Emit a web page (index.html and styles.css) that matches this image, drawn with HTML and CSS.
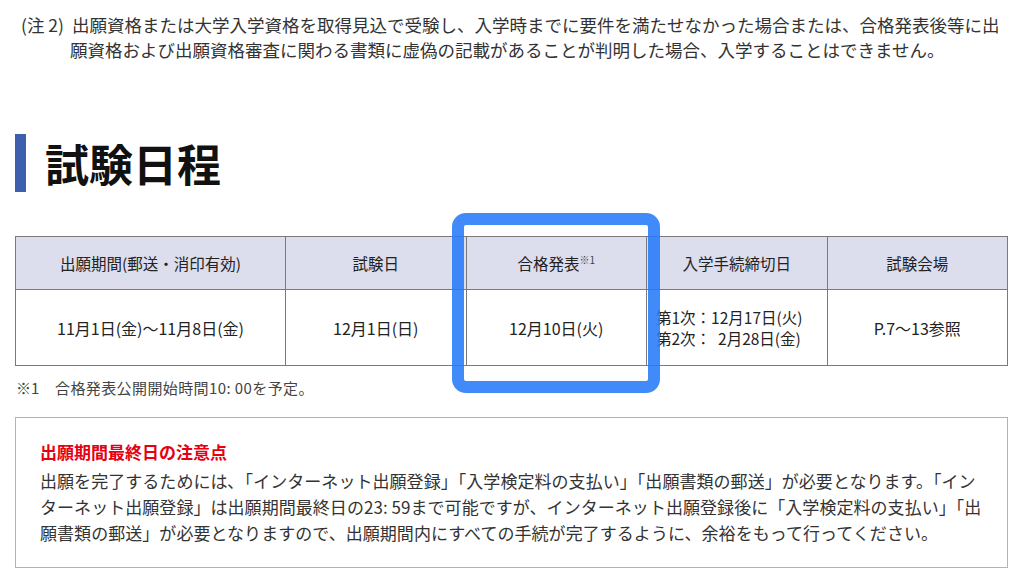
FILE: index.html
```html
<!DOCTYPE html>
<html lang="ja">
	<head>
		<meta charset="UTF-8" />
		<meta name="viewport" content="width=device-width, initial-scale=1.0" />
		<title>試験日程</title>
		<link rel="stylesheet" href="styles.css">
	</head>
	<body>
		<!-- 注記 -->
		<p class="note">
			<span class="note__label">(注 2)</span>出願資格または大学入学資格を取得見込で受験し、入学時までに要件を満たせなかった場合または、合格発表後等に出<br>願資格および出願資格審査に関わる書類に虚偽の記載があることが判明した場合、入学することはできません。
		</p>

		<h2 class="section-title">試験日程</h2>

		<!-- 日程表 -->
		<div class="schedule-wrap">
			<table class="schedule">
				<thead>
					<tr>
						<th class="col-wide">出願期間(郵送・消印有効)</th>
						<th>試験日</th>
						<th>合格発表<sup>※1</sup></th>
						<th>入学手続締切日</th>
						<th>試験会場</th>
					</tr>
				</thead>
				<tbody>
					<tr>
						<td>11月1日(金)～11月8日(金)</td>
						<td>12月1日(日)</td>
						<td>12月10日(火)</td>
						<td class="deadline">第1次：12月17日(火)<br>第2次：&nbsp;&nbsp;2月28日(金)</td>
						<td>P.7～13参照</td>
					</tr>
				</tbody>
			</table>
			<div class="highlight"></div>
		</div>

		<p class="footnote"><span class="footnote__mark">※1</span>合格発表公開開始時間10: 00を予定。</p>

		<!-- 注意点 -->
		<section class="notice">
			<h3 class="notice__title">出願期間最終日の注意点</h3>
			<p class="notice__text">出願を完了するためには､「インターネット出願登録」「入学検定料の支払い」「出願書類の郵送」が必要となります。「イン<br>ターネット出願登録」は出願期間最終日の23: 59まで可能ですが、インターネット出願登録後に「入学検定料の支払い」「出<br>願書類の郵送」が必要となりますので、出願期間内にすべての手続が完了するように、余裕をもって行ってください。</p>
		</section>
	</body>
</html>
```

FILE: styles.css
```css
body {
	font-family: "Noto Sans CJK JP", "Noto Sans", sans-serif;
	margin: 0;
	background-color: #fff;
	color: #222;
}

/* 注記 */
.note {
	margin: 0;
	padding: 12px 8px 0 70px;
	font-size: 17.5px;
	line-height: 25px;
	text-indent: -49px;
	white-space: nowrap;
	color: #333;
}

.note__label {
	display: inline-block;
	width: 51px;
	text-indent: 0;
}

/* 見出し */
.section-title {
	margin: 72px 0 0 15px;
	padding-left: 19px;
	height: 58px;
	border-left: 11px solid #3d5fae;
	font-size: 44px;
	font-weight: 700;
	line-height: 58px;
	color: #111;
}

/* 日程表 */
.schedule-wrap {
	position: relative;
	margin: 44px 16px 0 15px;
}

.schedule {
	width: 993px;
	border-collapse: collapse;
	table-layout: fixed;
}

.schedule th,
.schedule td {
	border: 1px solid #7a7a7a;
	text-align: center;
	font-weight: 400;
	color: #222;
	padding: 0;
}

.schedule th {
	height: 52px;
	background-color: #dcdded;
	font-size: 15.5px;
}

.schedule th.col-wide {
	width: 269px;
}

.schedule th sup {
	font-size: 10px;
	vertical-align: 6px;
	line-height: 0;
	color: #444;
}

.schedule td {
	height: 75px;
	font-size: 16px;
}

.schedule td.deadline {
	text-align: left;
	padding-left: 9px;
	font-size: 15.5px;
	line-height: 21px;
}

/* 強調枠 */
.highlight {
	position: absolute;
	left: 437px;
	top: -23px;
	width: 184px;
	height: 156px;
	border: 12px solid rgba(38, 122, 248, 0.88);
	border-radius: 14px;
	pointer-events: none;
}

/* 注釈 */
.footnote {
	margin: 12px 0 0 16px;
	font-size: 15px;
	line-height: 20px;
	letter-spacing: 0.4px;
	color: #444;
}

.footnote__mark {
	display: inline-block;
	width: 39px;
	letter-spacing: 0;
}

/* 注意点 */
.notice {
	margin: 19px 16px 0 15px;
	padding: 22px 24px 24px;
	border: 1px solid #ee98a3;
	height: 103px;
}

.notice__title {
	margin: 0;
	font-size: 17px;
	font-weight: 700;
	line-height: 24px;
	color: #e60012;
}

.notice__text {
	margin: 4px 0 0;
	font-size: 17px;
	line-height: 26px;
	white-space: nowrap;
	letter-spacing: 0.05px;
	color: #333;
}
```
